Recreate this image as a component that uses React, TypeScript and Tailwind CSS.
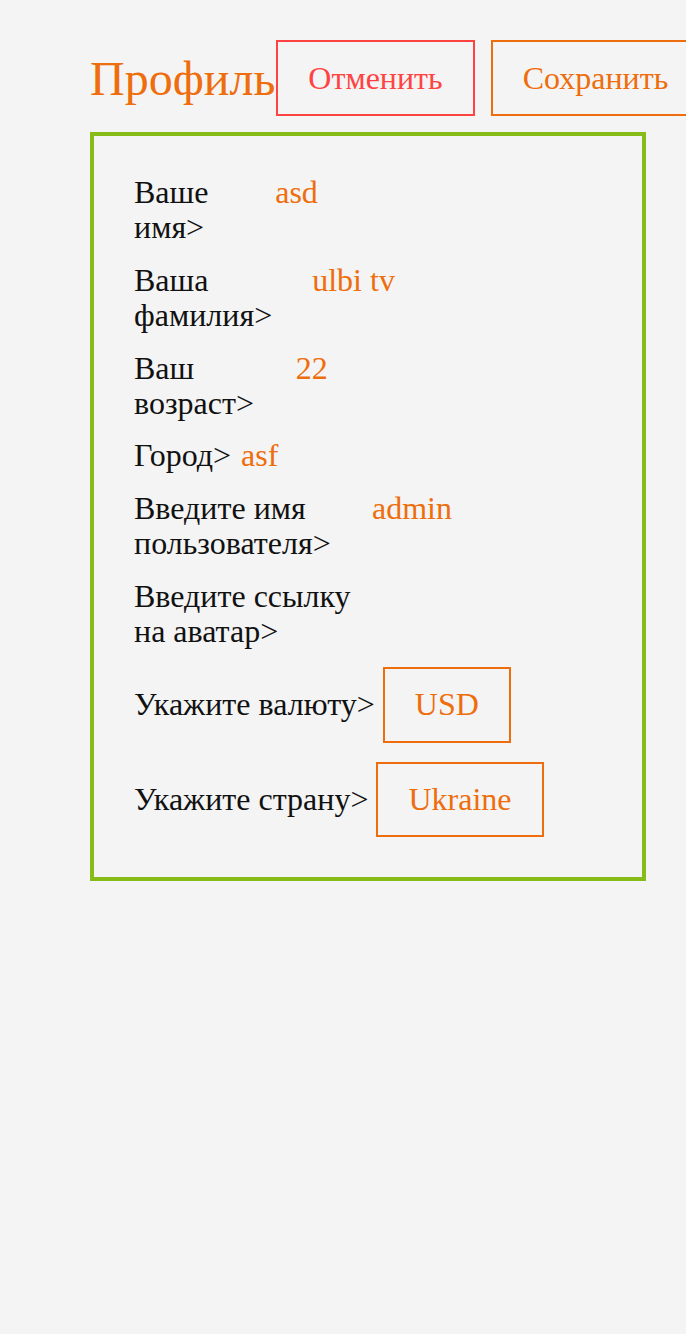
import React from "react";

const ORANGE = "text-[#ee6d0c]";

function TextRow({ label, value }: { label: string; value?: string }) {
  return (
    <div className="flex">
      <span className="mr-[10px] text-[#111111]">{label}&gt;</span>
      <div className={`grow basis-[380px] min-w-0 ${ORANGE}`}>{value}</div>
    </div>
  );
}

function SelectRow({ label, value }: { label: string; value: string }) {
  return (
    <div className="flex items-center py-[1px]">
      <span className="mr-[8px] text-[#111111] whitespace-nowrap">{label}&gt;</span>
      <div className={`border-2 border-[#ee6d0c] px-[30px] py-[18px] ${ORANGE}`}>{value}</div>
    </div>
  );
}

export default function App() {
  return (
    <div className="min-h-screen w-full overflow-hidden bg-[#f4f4f4] font-['Liberation_Serif','Times_New_Roman',serif] pt-[40px] pl-[90px]">
      <div className="w-[556px] flex flex-col gap-[16px]">
        <div className="flex justify-between items-center">
          <h1 className={`text-[48px] leading-[53px] ${ORANGE}`}>Профиль</h1>
          <div className="flex gap-[16px] shrink-0 ml-[1px]">
            <button className="border-2 border-[#ff4343] px-[30px] py-[18px] text-[32px] leading-[36px] text-[#ff4343] whitespace-nowrap">
              Отменить
            </button>
            <button className={`border-2 border-[#ee6d0c] px-[30px] py-[18px] text-[32px] leading-[36px] whitespace-nowrap ${ORANGE}`}>
              Сохранить
            </button>
          </div>
        </div>
        <div className="border-4 border-[#86bb18] pt-[39px] pb-[39px] px-[40px] flex flex-col gap-[17px] text-[32px] leading-[35.4px]">
          <TextRow label="Ваше имя" value="asd" />
          <TextRow label="Ваша фамилия" value="ulbi tv" />
          <TextRow label="Ваш возраст" value="22" />
          <TextRow label="Город" value="asf" />
          <TextRow label="Введите имя пользователя" value="admin" />
          <TextRow label="Введите ссылку на аватар" value="" />
          <SelectRow label="Укажите валюту" value="USD" />
          <SelectRow label="Укажите страну" value="Ukraine" />
        </div>
      </div>
    </div>
  );
}
